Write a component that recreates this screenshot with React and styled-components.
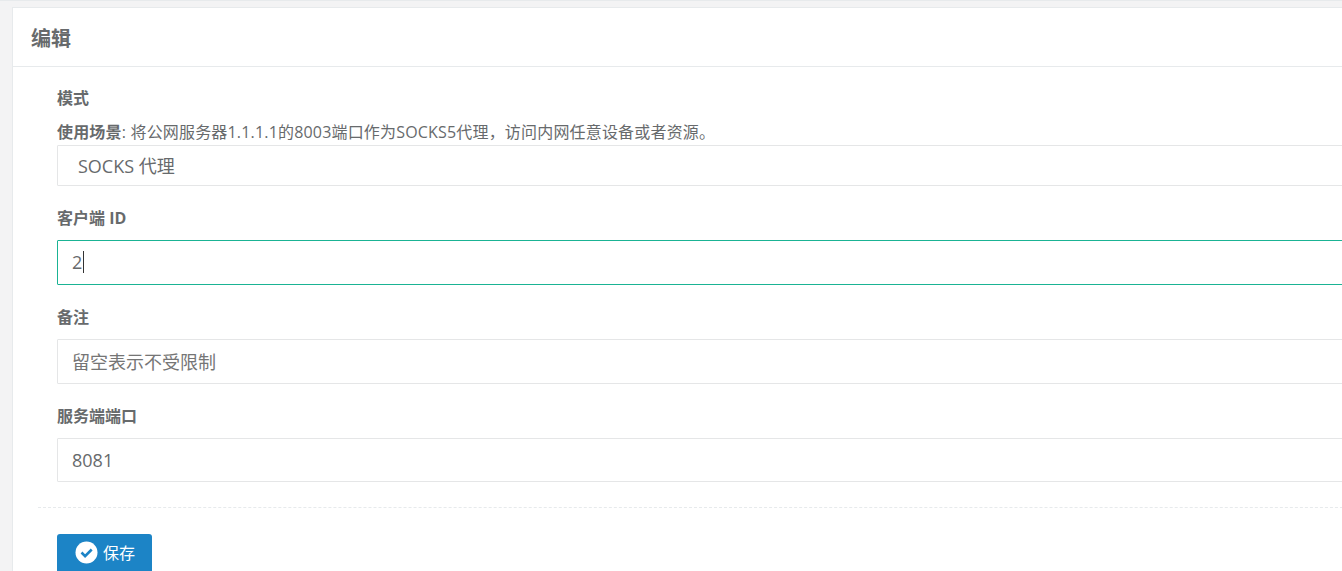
import React from "react";
import styled, { createGlobalStyle } from "styled-components";

const Global = createGlobalStyle`
  html, body { margin: 0; padding: 0; height: 571px; overflow: hidden; background: #f3f3f4; }
  body { font-family: "Open Sans", "Noto Sans CJK SC", sans-serif; color: #676a6c; font-size: 16px; }
`;
const Page = styled.div`
  width: 1342px; height: 571px; overflow: hidden; box-sizing: border-box;
  border-top: 1px solid #e7eaec; padding: 6px 0 0 12px;
`;
const Card = styled.section`
  width: 1400px; height: 600px; background: #fff; box-sizing: border-box;
  border-top: 1px solid #e7eaec; border-left: 1px solid #e7eaec;
`;
const CardHeader = styled.header`
  height: 59px; box-sizing: border-box; border-bottom: 1px solid #e7eaec;
  padding: 3px 0 0 18px; display: flex; align-items: center;
`;
const Title = styled.h5`
  margin: 0; font-size: 20px; font-weight: 700; color: #676a6c; line-height: 1;
`;
const CardBody = styled.div`
  padding: 19px 0 0 25px; display: flex; flex-direction: column;
`;
const Group = styled.div`
  margin-left: 19px; display: flex; flex-direction: column; margin-bottom: ${p => p.$mb}px;
`;
const Label = styled.label`
  font-size: 16px; font-weight: 700; line-height: 24px; height: 24px; color: #676a6c; margin-bottom: ${p => p.$mb}px;
`;
const Hint = styled.div`
  font-size: 16px; line-height: 24px; height: 25px; color: #676a6c; margin-top: 10px; white-space: nowrap;
  letter-spacing: 0.18px;
  strong { font-weight: 700; }
`;
const Field = styled.div`
  box-sizing: border-box; width: 1340px; height: ${p => p.$h}px;
  border: 1px solid #e5e6e7; border-radius: 1px;
  background: #fff; display: flex; align-items: center;
  padding: 0 0 ${p => p.$pb}px ${p => p.$pad}px; font-size: 18px; color: ${p => p.$color};
`;
const ActiveField = styled.div`
  box-sizing: border-box; width: 1340px; height: 45px;
  border: 1px solid #1ab394; border-radius: 1px;
  background: #fff; display: flex; align-items: center;
  padding: 0 0 2px 14px; font-size: 18px; color: #676a6c;
`;
const Caret = styled.span`
  display: inline-block; width: 1px; height: 22px; background: #333; margin-left: 1px;
`;
const Divider = styled.hr`
  border: 0; border-top: 1px dashed #e7eaec; margin: 0 0 26px 0; height: 0; width: 1340px;
`;
const SaveButton = styled.button`
  margin-left: 19px; width: 95px; height: 40px; border: 0; border-radius: 3px; background: #1c84c6;
  color: #fff; font: inherit; font-size: 16px; display: flex; align-items: center; justify-content: flex-start;
  padding: 0 0 3px 18px; gap: 5px; align-self: flex-start;
`;
const SaveText = styled.span`
  margin-bottom: 2px;
`;

const CheckIcon = () => (
  <svg width="23" height="23" viewBox="0 0 23 23" aria-hidden="true">
    <circle cx="11.5" cy="11.5" r="11" fill="#fff" />
    <path d="M6.5 11.5l3.6 3.6 6.6-6.6" fill="none" stroke="#1c84c6" strokeWidth="2.6" />
  </svg>
);

export default function App() {
  return (
    <Page>
      <Global />
      <Card>
        <CardHeader><Title>编辑</Title></CardHeader>
        <CardBody>
          <Group $mb={20}>
            <Label>模式</Label>
            <Hint><strong>使用场景</strong>: 将公网服务器1.1.1.1的8003端口作为SOCKS5代理，访问内网任意设备或者资源。</Hint>
            <Field $h={41} $pad={20} $pb={2} $color="#676a6c">SOCKS 代理</Field>
          </Group>
          <Group $mb={20}>
            <Label $mb={10}>客户端 ID</Label>
            <ActiveField>2<Caret /></ActiveField>
          </Group>
          <Group $mb={20}>
            <Label $mb={10}>备注</Label>
            <Field $h={45} $pad={14} $pb={2} $color="#757575">留空表示不受限制</Field>
          </Group>
          <Group $mb={25}>
            <Label $mb={10}>服务端端口</Label>
            <Field $h={44} $pad={14} $pb={0} $color="#676a6c">8081</Field>
          </Group>
          <Divider />
          <SaveButton><CheckIcon /><SaveText>保存</SaveText></SaveButton>
        </CardBody>
      </Card>
    </Page>
  );
}
